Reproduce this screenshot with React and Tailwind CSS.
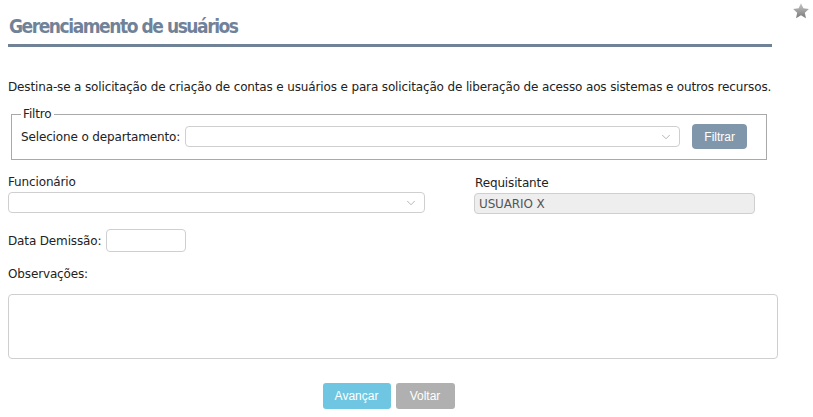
import { ChevronDown } from 'lucide-react';

const FONT = "font-['DejaVu_Sans',Tahoma,sans-serif]";

function SelectBox({ className }) {
  return (
    <div className={`flex h-[21px] items-center justify-end rounded-[4px] border border-[#cfcfcf] bg-white pr-[6px] ${className}`}>
      <ChevronDown className="h-[14px] w-[14px] text-[#9a9a9a]" strokeWidth={1.25} />
    </div>
  );
}

function StarIcon() {
  return (
    <svg width="18" height="18" viewBox="0 0 24 24">
      <defs>
        <linearGradient id="starg" x1="0" y1="0" x2="0" y2="1">
          <stop offset="0" stopColor="#c8c8c8" />
          <stop offset="1" stopColor="#7a7a7a" />
        </linearGradient>
      </defs>
      <path
        d="M12 1.5l3.2 6.9 7.3.8-5.4 5 1.5 7.3L12 17.8l-6.6 3.7 1.5-7.3-5.4-5 7.3-.8z"
        fill="url(#starg)"
      />
    </svg>
  );
}

export default function App() {
  return (
    <div className={`relative h-[417px] w-[813px] bg-white text-[12px] tracking-[-0.14px] text-[#222] ${FONT}`}>
      <div className="absolute right-[3px] top-[2px]">
        <StarIcon />
      </div>

      <div className="px-[8px] pt-[12px]">
        <h1 className="pl-[1px] font-['DejaVu_Sans_Condensed','DejaVu_Sans',sans-serif] text-[19px] font-bold leading-[28px] tracking-[-1.45px] text-[#6f8299]">
          Gerenciamento de usuários
        </h1>
        <div className="mt-[4px] h-[3px] w-[764px] bg-[#6f8296]" />

        <p className="mt-[33px] leading-[15px]">
          Destina-se a solicitação de criação de contas e usuários e para solicitação de liberação de acesso aos sistemas e outros recursos.
        </p>

        <fieldset className="mx-[3px] mt-[12px] w-[756px] border border-[#a9a9a9] px-[9px] pb-[10px] pt-[3px]">
          <legend className="px-[2px] leading-[14px]">Filtro</legend>
          <div className="flex items-center">
            <span>Selecione o departamento:</span>
            <SelectBox className="ml-[5px] w-[495px]" />
            <button className="ml-[12px] h-[25px] w-[55px] rounded-[4px] bg-[#8097ab] font-['Liberation_Sans',Arial,sans-serif] text-[12px] tracking-normal text-white">
              Filtrar
            </button>
          </div>
        </fieldset>

        <div className="mt-[15px] flex">
          <div className="w-[417px]">
            <div className="leading-[15px]">Funcionário</div>
            <SelectBox className="mt-[2px] w-[417px]" />
          </div>
          <div className="ml-[49px] pt-[1px]">
            <div className="pl-[1px] leading-[15px]">Requisitante</div>
            <div className="mt-[2px] flex h-[21px] w-[281px] items-center rounded-[4px] border border-[#cfcfcf] bg-[#eeeeee] px-[4px] text-[#555]">
              USUARIO X
            </div>
          </div>
        </div>

        <div className="mt-[15px] flex items-center">
          <span>Data Demissão:</span>
          <div className="ml-[5px] h-[23px] w-[80px] rounded-[4px] border border-[#cfcfcf] bg-white" />
        </div>

        <div className="mt-[15px] leading-[15px]">Observações:</div>
        <div className="mt-[12px] h-[65px] w-[770px] rounded-[4px] border border-[#cfcfcf] bg-white" />

        <div className="mt-[24px] flex justify-center gap-[5px] pr-[36px] font-['Liberation_Sans',Arial,sans-serif] text-[12px] tracking-normal text-white">
          <button className="h-[26px] w-[68px] rounded-[3px] bg-[#6ec6e2]">Avançar</button>
          <button className="h-[26px] w-[59px] rounded-[3px] bg-[#b0b0b0]">Voltar</button>
        </div>
      </div>
    </div>
  );
}
